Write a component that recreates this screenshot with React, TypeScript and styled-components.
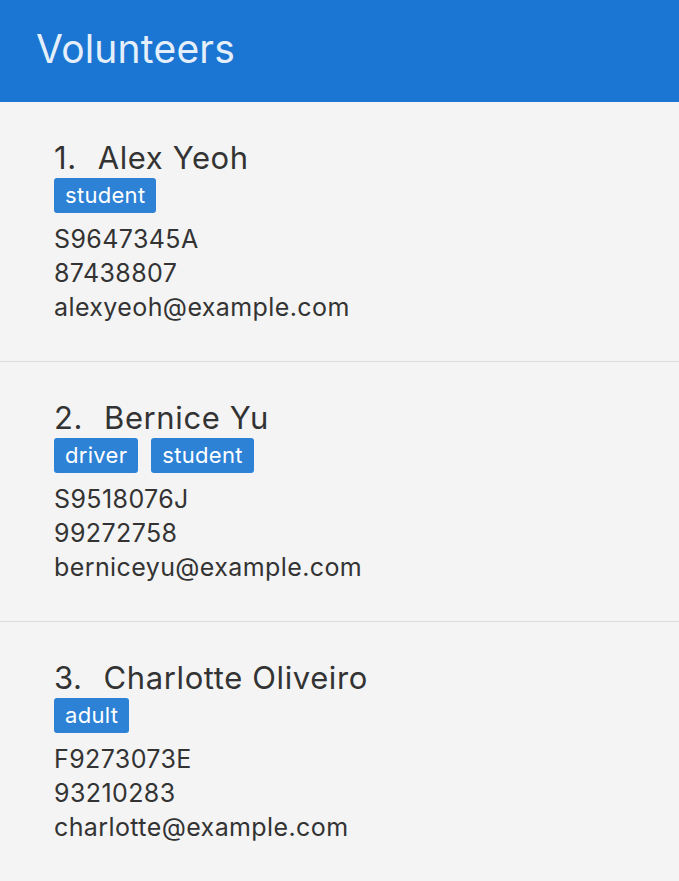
import styled, { createGlobalStyle } from 'styled-components'

const GlobalStyle = createGlobalStyle`
  html, body {
    margin: 0;
    padding: 0;
    background-color: #f4f4f4;
  }
  body {
    font-family: Inter, "Noto Sans", sans-serif;
    color: #333333;
  }
`

const Page = styled.div`
  width: 679px;
  min-height: 881px;
  background-color: #f4f4f4;
`

const Header = styled.header`
  height: 102px;
  background-color: #1a76d2;
  padding: 29px 36px 0;
  box-sizing: border-box;
`

const Title = styled.h1`
  margin: 0;
  font-size: 39px;
  line-height: 1;
  font-weight: 400;
  letter-spacing: 0.2px;
  color: #e4effb;
`

const List = styled.div`
  display: flex;
  flex-direction: column;
`

const Card = styled.div`
  height: 260px;
  padding: 38px 54px 0;
  box-sizing: border-box;
  border-bottom: 1px solid #dcdcdc;
  display: flex;
  flex-direction: column;
`

const Name = styled.div`
  display: flex;
  font-size: 31px;
  line-height: 36px;
  letter-spacing: 0.6px;
  color: #333333;
`

const Index = styled.span`
  margin-right: 21px;
`

const Tags = styled.div`
  display: flex;
  gap: 13px;
  margin-top: 2px;
  margin-bottom: 9px;
`

const Tag = styled.span`
  background-color: #2d82d6;
  color: #ffffff;
  font-size: 22px;
  line-height: 35px;
  letter-spacing: 0.3px;
  padding: 0 11px;
  border-radius: 3px;
`

const Line = styled.div`
  font-size: 25px;
  line-height: 34px;
  letter-spacing: 0.4px;
  color: #333333;
`

interface Volunteer {
  name: string
  tags: string[]
  nric: string
  phone: string
  email: string
}

const volunteers: Volunteer[] = [
  {
    name: 'Alex Yeoh',
    tags: ['student'],
    nric: 'S9647345A',
    phone: '87438807',
    email: 'alexyeoh@example.com',
  },
  {
    name: 'Bernice Yu',
    tags: ['driver', 'student'],
    nric: 'S9518076J',
    phone: '99272758',
    email: 'berniceyu@example.com',
  },
  {
    name: 'Charlotte Oliveiro',
    tags: ['adult'],
    nric: 'F9273073E',
    phone: '93210283',
    email: 'charlotte@example.com',
  },
]

export default function App() {
  return (
    <Page>
      <GlobalStyle />
      <Header>
        <Title>Volunteers</Title>
      </Header>
      <List>
        {volunteers.map((v, i) => (
          <Card key={v.nric}>
            <Name>
              <Index>{i + 1}.</Index>
              <span>{v.name}</span>
            </Name>
            <Tags>
              {v.tags.map((t) => (
                <Tag key={t}>{t}</Tag>
              ))}
            </Tags>
            <Line>{v.nric}</Line>
            <Line>{v.phone}</Line>
            <Line>{v.email}</Line>
          </Card>
        ))}
      </List>
    </Page>
  )
}
